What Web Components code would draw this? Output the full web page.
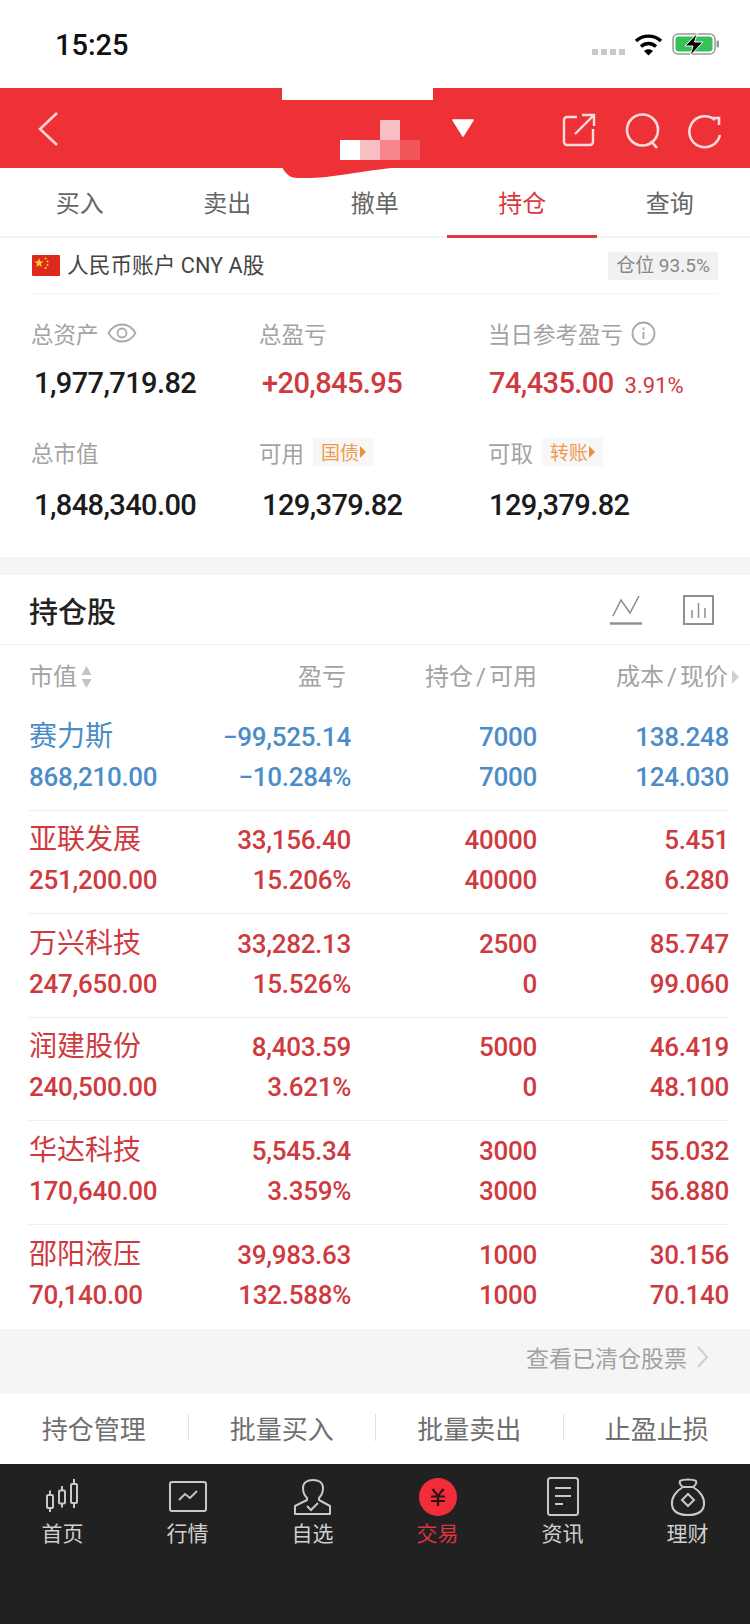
<!DOCTYPE html>
<html lang="zh"><head><meta charset="utf-8"><title>持仓</title>
<style>
html,body{margin:0;padding:0;background:#fff}
body{font-family:Roboto,"Noto Sans CJK SC",sans-serif;width:750px;height:1624px;overflow:hidden}
app-shell{display:flex}
</style></head><body>
<app-shell>
  <status-bar></status-bar>
  <nav-header></nav-header>
  <tab-strip>
    <span>买入</span><span>卖出</span><span>撤单</span><span class="on">持仓</span><span>查询</span>
  </tab-strip>
  <account-row></account-row>
  <asset-summary></asset-summary>
  <section-band></section-band>
  <holdings-head></holdings-head>
  <holdings-columns></holdings-columns>
  <holding-row tone="blue"><span>赛力斯</span><span>−99,525.14</span><span>7000</span><span>138.248</span><span>868,210.00</span><span>−10.284%</span><span>7000</span><span>124.030</span></holding-row>
  <holding-row><span>亚联发展</span><span>33,156.40</span><span>40000</span><span>5.451</span><span>251,200.00</span><span>15.206%</span><span>40000</span><span>6.280</span></holding-row>
  <holding-row><span>万兴科技</span><span>33,282.13</span><span>2500</span><span>85.747</span><span>247,650.00</span><span>15.526%</span><span>0</span><span>99.060</span></holding-row>
  <holding-row><span>润建股份</span><span>8,403.59</span><span>5000</span><span>46.419</span><span>240,500.00</span><span>3.621%</span><span>0</span><span>48.100</span></holding-row>
  <holding-row><span>华达科技</span><span>5,545.34</span><span>3000</span><span>55.032</span><span>170,640.00</span><span>3.359%</span><span>3000</span><span>56.880</span></holding-row>
  <holding-row last><span>邵阳液压</span><span>39,983.63</span><span>1000</span><span>30.156</span><span>70,140.00</span><span>132.588%</span><span>1000</span><span>70.140</span></holding-row>
  <cleared-link></cleared-link>
  <action-bar><span>持仓管理</span><span>批量买入</span><span>批量卖出</span><span>止盈止损</span></action-bar>
  <bottom-nav>
    <nav-item label="首页"><svg viewBox="0 0 40 40" width="40" height="40" fill="none" stroke="#c8c8c8" stroke-width="2"><rect x="4" y="18" width="6" height="13" rx="1"/><path d="M7 13.500V18M7 31v4"/><rect x="16" y="13.500" width="6" height="13" rx="1"/><path d="M19 9v4.500M19 26.500v4"/><rect x="28" y="7" width="6" height="19" rx="1"/><path d="M31 2v5M31 26v5"/></svg></nav-item>
    <nav-item label="行情"><svg viewBox="0 0 40 40" width="40" height="40" fill="none" stroke="#c8c8c8" stroke-width="2"><rect x="2" y="5" width="36" height="29" rx="2"/><path d="M11 23l6-6 5 4 7-7" stroke-width="1.800"/></svg></nav-item>
    <nav-item label="自选"><svg viewBox="0 0 40 40" width="40" height="40" fill="none" stroke="#c8c8c8" stroke-width="2"><path d="M14 21c-3-3-4-6-4-10 0-5 4-8 10-8s10 3 10 8c0 4-1 7-4 10v2l11 6v8H2v-8l12-6z" stroke-linejoin="round"/><path d="M14 29l4 4 7-7"/></svg></nav-item>
    <nav-item label="交易" active><svg viewBox="0 0 40 40" width="40" height="40"><circle cx="20" cy="20" r="19" fill="#f22c39"/><path d="M14.500 12l5.500 7 5.500-7M13 19.500h14M13 24h14M20 19v10" fill="none" stroke="#2a1416" stroke-width="2.200"/></svg></nav-item>
    <nav-item label="资讯"><svg viewBox="0 0 40 40" width="40" height="40" fill="none" stroke="#c8c8c8" stroke-width="2"><rect x="5" y="1" width="30" height="37" rx="2.500"/><path d="M12 11h16M12 19h16M12 27h8"/></svg></nav-item>
    <nav-item label="理财"><svg viewBox="0 0 40 40" width="40" height="40" fill="none" stroke="#c8c8c8" stroke-width="2"><path d="M12 4c3-2 13-2 16 0 1 2-1 5-3 6 7 4 12 11 11 18-1 7-6 10-16 10S5 35 4 28c-1-7 4-14 11-18-2-1-4-4-3-6zM15 10h10"/><path d="M20 17l6 6-6 6-6-6z"/></svg></nav-item>
  </bottom-nav>
</app-shell>
<script>
function def(name, css, html, setup){
  customElements.define(name, class extends HTMLElement{
    constructor(){super();
      const r=this.attachShadow({mode:'open'});
      r.innerHTML='<style>'+css+'</style>'+(typeof html==='function'?html(this):html);
    }
    connectedCallback(){ if(setup) setup(this); }
  });
}
def('app-shell',':host{display:flex;flex-direction:column;width:750px;height:1624px;background:#fff;overflow:hidden}','<slot></slot>');

def('status-bar',`:host{display:flex;align-items:flex-start;height:88px;box-sizing:border-box;position:relative;background:#fff}
.t{font:500 29px/34px Roboto,sans-serif;color:#111;margin:28px 0 0 55px}
.r{margin-left:auto;display:flex;align-items:flex-start;margin-right:31px;padding-top:33px}
svg{display:block}`,
`<div class="t">15:25</div><div class="r">
<svg width="34" height="24" viewBox="0 0 34 24" style="margin-top:14px"><g fill="#c9c9c9"><rect x="0" y="2" width="6" height="6"/><rect x="9" y="2" width="6" height="6"/><rect x="18" y="2" width="6" height="6"/><rect x="27" y="2" width="6" height="6"/></g></svg>
<svg width="29" height="23" viewBox="0 0 29 23" style="margin:0 9px 0 8px" fill="none" stroke="#000" stroke-width="3.400"><path d="M2 8c7-6.500 18-6.500 25 0"/><path d="M7 13.500c4.500-4 10.500-4 15 0"/><path d="M14.500 22.500l-4.500-4.500c2.500-2.200 6.500-2.200 9 0z" fill="#000" stroke="none"/></svg>
<svg width="47" height="23" viewBox="0 0 47 23"><rect x="1" y="1" width="42" height="20" rx="5" fill="#fff" stroke="#9a9a9a" stroke-width="1.500"/><rect x="3.500" y="3.500" width="37" height="15" rx="3" fill="#36c25b"/><rect x="44.500" y="7.500" width="2.500" height="7" rx="1" fill="#9a9a9a"/><path d="M25.500 0L13 13h8l-3 10 13-14h-8.500z" fill="#000" stroke="#fff" stroke-width="1"/></svg>
</div>`);

def('nav-header',`:host{display:flex;height:80px;background:#ee3037;position:relative;align-items:flex-start;z-index:2}
svg{display:block;position:relative;flex:none}
.notch{position:absolute;left:282px;top:0;width:151px;height:12px;background:#fff}
.bulge{position:absolute;left:0;top:79px}
.pix{position:absolute;left:340px;top:32px}
.tri{position:absolute;left:452px;top:30px}
.ic{margin-left:auto;display:flex;margin-right:29px;margin-top:25px}`,
`<svg style="margin:23px 0 0 37px" width="23" height="36" viewBox="0 0 23 36" fill="none" stroke="#f9d5d6" stroke-width="2.600"><path d="M20 2L3 18l17 16"/></svg>
<div class="notch"></div>
<svg class="bulge" width="750" height="12" viewBox="0 0 750 12"><path d="M282 0c4 8 9 11 16 11c34 1 58-7 104-11z" fill="#ee3037"/></svg>
<svg class="pix" width="80" height="40" viewBox="0 0 80 40"><rect x="40" y="0" width="20" height="20" fill="#f8bfc3"/><rect x="0" y="20" width="20" height="20" fill="#fff"/><rect x="20" y="20" width="20" height="20" fill="#f8bfc3"/><rect x="40" y="20" width="20" height="20" fill="#f6868c"/><rect x="60" y="20" width="20" height="20" fill="#f0555a"/></svg>
<svg class="tri" width="22" height="19" viewBox="0 0 22 19"><path d="M1 2h20L11 18z" fill="#fff" stroke="#fff" stroke-linejoin="round" stroke-width="1.500"/></svg>
<div class="ic">
<svg width="34" height="34" viewBox="0 0 34 34" fill="none" stroke="#fbdcdd" stroke-width="2.400" style="margin-right:29px"><path d="M15 4H5a3 3 0 0 0-3 3v22a3 3 0 0 0 3 3h23a3 3 0 0 0 3-3V16M13 21L31 3M20 2h12v11"/></svg>
<svg width="36" height="36" viewBox="0 0 36 36" fill="none" stroke="#fbdcdd" stroke-width="2.600" style="margin-right:25px"><circle cx="17.500" cy="17" r="15.500"/><path d="M26 28l6 7"/></svg>
<svg width="35" height="36" viewBox="0 0 35 36" fill="none" stroke="#fbdcdd" stroke-width="2.600"><path d="M29 7A15.500 15.500 0 1 0 34 22M26 5h7v7"/></svg>
</div>`);

def('tab-strip',`:host{display:flex;height:70px;box-sizing:border-box;border-bottom:2px solid #f4f4f4;position:relative;padding-left:6px}
::slotted(span){flex:0 0 147.500px;text-align:center;font:400 24px/68px "Noto Sans CJK SC",sans-serif;color:#666;height:70px;box-sizing:border-box}
::slotted(.on){flex:0 0 150px;margin:0 -1.250px;color:#d8393f;border-bottom:3px solid #e23a41}`,'<slot></slot>');

def('account-row',`:host{display:flex;align-items:center;height:56px;margin:0 32px;box-sizing:border-box;border-bottom:1px solid #f3f3f3}
svg{display:block;margin-right:7px}
.t{font:400 21.700px/28px Roboto,"Noto Sans CJK SC",sans-serif;color:#444}
.b{margin-left:auto;background:#f1f1f1;height:28px;width:110px;box-sizing:border-box;font:400 19px/28px Roboto,"Noto Sans CJK SC",sans-serif;text-align:center;color:#888}`,
`<svg width="28" height="21" viewBox="0 0 28 21"><rect width="28" height="21" rx="1" fill="#de2a1d"/><path d="M7 3l1.200 3.400h3.500l-2.900 2.100 1.100 3.500L7 9.900 4.100 12l1.100-3.500-2.900-2.100h3.500z" fill="#f8d43a"/><g fill="#f8d43a"><circle cx="13.500" cy="3.500" r="1"/><circle cx="15.500" cy="6.500" r="1"/><circle cx="15.500" cy="10" r="1"/><circle cx="13.500" cy="13" r="1"/></g></svg>
<div class="t">人民币账户 CNY A股</div><div class="b">仓位 93.5%</div>`);

const eye=`<svg width="30" height="24" viewBox="0 0 30 24" fill="none" stroke="#a9a9a9" stroke-width="1.800" style="margin-left:8px"><path d="M1.500 12C5 6 9.500 3.500 15 3.500S25 6 28.500 12C25 18 20.500 20.500 15 20.500S5 18 1.500 12z"/><circle cx="15" cy="12" r="4.500"/></svg>`;
const info=`<svg width="25" height="25" viewBox="0 0 25 25" fill="none" stroke="#a9a9a9" stroke-width="1.800" style="margin-left:8px"><circle cx="12.500" cy="12.500" r="11"/><path d="M12.500 11v7M12.500 6.500v2.500"/></svg>`;
def('asset-summary',`:host{display:grid;grid-template-columns:228px 229px 1fr;padding:21px 0 0 31px;height:263px;box-sizing:border-box;grid-template-rows:87px 93px;row-gap:32px;align-content:start}
.c{display:flex;flex-direction:column}
.l{display:flex;align-items:center;height:36px;font:400 22.500px/36px "Noto Sans CJK SC",sans-serif;color:#a3a3a3}
.v{font:500 29px/50px Roboto,sans-serif;color:#1b1b1b;margin-top:7px;margin-left:3px;display:flex;align-items:baseline;letter-spacing:-.6px}
.c:nth-of-type(3n) .v{margin-left:1px}
.c.low .v{margin-top:10px}
.red{color:#cf3a3f}
.s{font-size:22px;margin-left:11px;font-weight:400;letter-spacing:0}
.tag{display:inline-flex;align-items:center;height:28px;margin-left:9px;padding:0 0 0 8px;width:53px;background:#f7f7f7;font:400 19px/28px "Noto Sans CJK SC",sans-serif;color:#ee9a52;gap:1px}
.tag i{display:block;width:0;height:0;border-left:6px solid #ee8f3c;border-top:6px solid transparent;border-bottom:6px solid transparent}`,
`<div class="c"><div class="l">总资产${eye}</div><div class="v">1,977,719.82</div></div>
<div class="c"><div class="l">总盈亏</div><div class="v red">+20,845.95</div></div>
<div class="c"><div class="l">当日参考盈亏${info}</div><div class="v red">74,435.00<span class="s">3.91%</span></div></div>
<div class="c low"><div class="l">总市值</div><div class="v">1,848,340.00</div></div>
<div class="c low"><div class="l">可用<span class="tag">国债<i></i></span></div><div class="v">129,379.82</div></div>
<div class="c low"><div class="l">可取<span class="tag">转账<i></i></span></div><div class="v">129,379.82</div></div>`);

def('section-band',':host{display:block;height:18px;background:#f5f5f5}','');

def('holdings-head',`:host{display:flex;align-items:center;height:70px;box-sizing:border-box;padding:0 36px 0 29px;border-bottom:1px solid #f3f3f3}
.t{font:500 29px/40px "Noto Sans CJK SC",sans-serif;color:#222}
.r{margin-left:auto;display:flex;gap:41px}
svg{display:block}`,
`<div class="t">持仓股</div><div class="r">
<svg width="32" height="30" viewBox="0 0 32 30" fill="none" stroke="#8f8f8f" stroke-width="1.600"><path d="M3 21L11 5l9 13L29 1"/><path d="M0 28.500h32" stroke-width="2.400"/></svg>
<svg width="31" height="30" viewBox="0 0 31 30" fill="none" stroke="#8f8f8f" stroke-width="2"><rect x="1" y="1" width="29" height="28"/><path d="M9 23v-8M15.500 23V8M22 23V13" stroke-width="1.500"/></svg>
</div>`);

def('holdings-columns',`:host{display:grid;grid-template-columns:200px 117px 191px 191px;height:62px;margin:0 22px 0 29px;padding-top:1px;box-sizing:border-box;align-items:center;font:400 24px/34px Roboto,"Noto Sans CJK SC",sans-serif;color:#a3a3a3}
div{text-align:right;white-space:nowrap}
.a{text-align:left;display:flex;align-items:center}
.e{display:flex;justify-content:flex-end;align-items:center}
.sl{margin:0 3px}
svg{display:block}`,
`<div class="a">市值<svg style="margin-left:3px" width="13" height="24" viewBox="0 0 13 24" fill="#c4c4c4"><path d="M6.500 1l5 9h-10zM6.500 23l-5-9h10z"/></svg></div><div>盈亏</div><div>持仓<span class="sl">/</span>可用</div><div class="e"><span>成本<span class="sl">/</span>现价</span><svg style="margin:0 -11px 0 4px" width="7" height="14" viewBox="0 0 7 14" fill="#d0d0d0"><path d="M0 0l7 7-7 7z"/></svg></div>`);

def('holding-row',`:host{display:grid;grid-template-columns:160px 162px 186px 192px;grid-template-rows:40px 40px;align-content:center;height:103.500px;padding-bottom:3px;box-sizing:border-box;margin:0 21px 0 29px;border-bottom:1px solid #eee;color:#cf3a3f;font:500 26px/40px Roboto,"Noto Sans CJK SC",sans-serif;letter-spacing:-.3px}
:host([tone=blue]){color:#4b8dc8}
:host([last]){border-bottom:0;height:104.500px;padding-bottom:4.500px}
::slotted(span){text-align:right;white-space:nowrap}
::slotted(:nth-child(4n+1)){text-align:left}
::slotted(:first-child){font-size:28px;font-weight:400;letter-spacing:0}`,'<slot></slot>');

def('cleared-link',`:host{display:flex;align-items:center;justify-content:flex-end;height:65px;box-sizing:border-box;padding:0 41px 10px 0;background:#f5f5f5;font:400 23px/34px "Noto Sans CJK SC",sans-serif;color:#a2a2a2;gap:9px}
svg{display:block}`,
`查看已清仓股票<svg width="13" height="22" viewBox="0 0 13 22" fill="none" stroke="#cfcfcf" stroke-width="2"><path d="M2 1l9 10-9 10"/></svg>`);

def('action-bar',`:host{display:flex;height:70px;box-sizing:border-box;padding-bottom:3px;align-items:center;background:#fff}
::slotted(span){flex:0 0 187.500px;box-sizing:border-box;text-align:center;font:400 26px/27px "Noto Sans CJK SC",sans-serif;color:#6f6f6f;height:27px;border-left:1px solid #e2e2e2}
::slotted(span:first-child){border-left:0}`,'<slot></slot>');

def('bottom-nav',`:host{display:flex;flex:1;background:#212121;align-items:flex-start;padding-top:12px}`,'<slot></slot>');
def('nav-item',`:host{flex:0 0 125px;display:flex;flex-direction:column;align-items:center;color:#d0d0d0;font:400 21px/28px "Noto Sans CJK SC",sans-serif}
:host([active]){color:#dc3440}
.i{height:42px;display:flex;align-items:center}`,
h=>`<div class="i"><slot></slot></div><div>${h.getAttribute('label')}</div>`);
</script>
</body></html>
